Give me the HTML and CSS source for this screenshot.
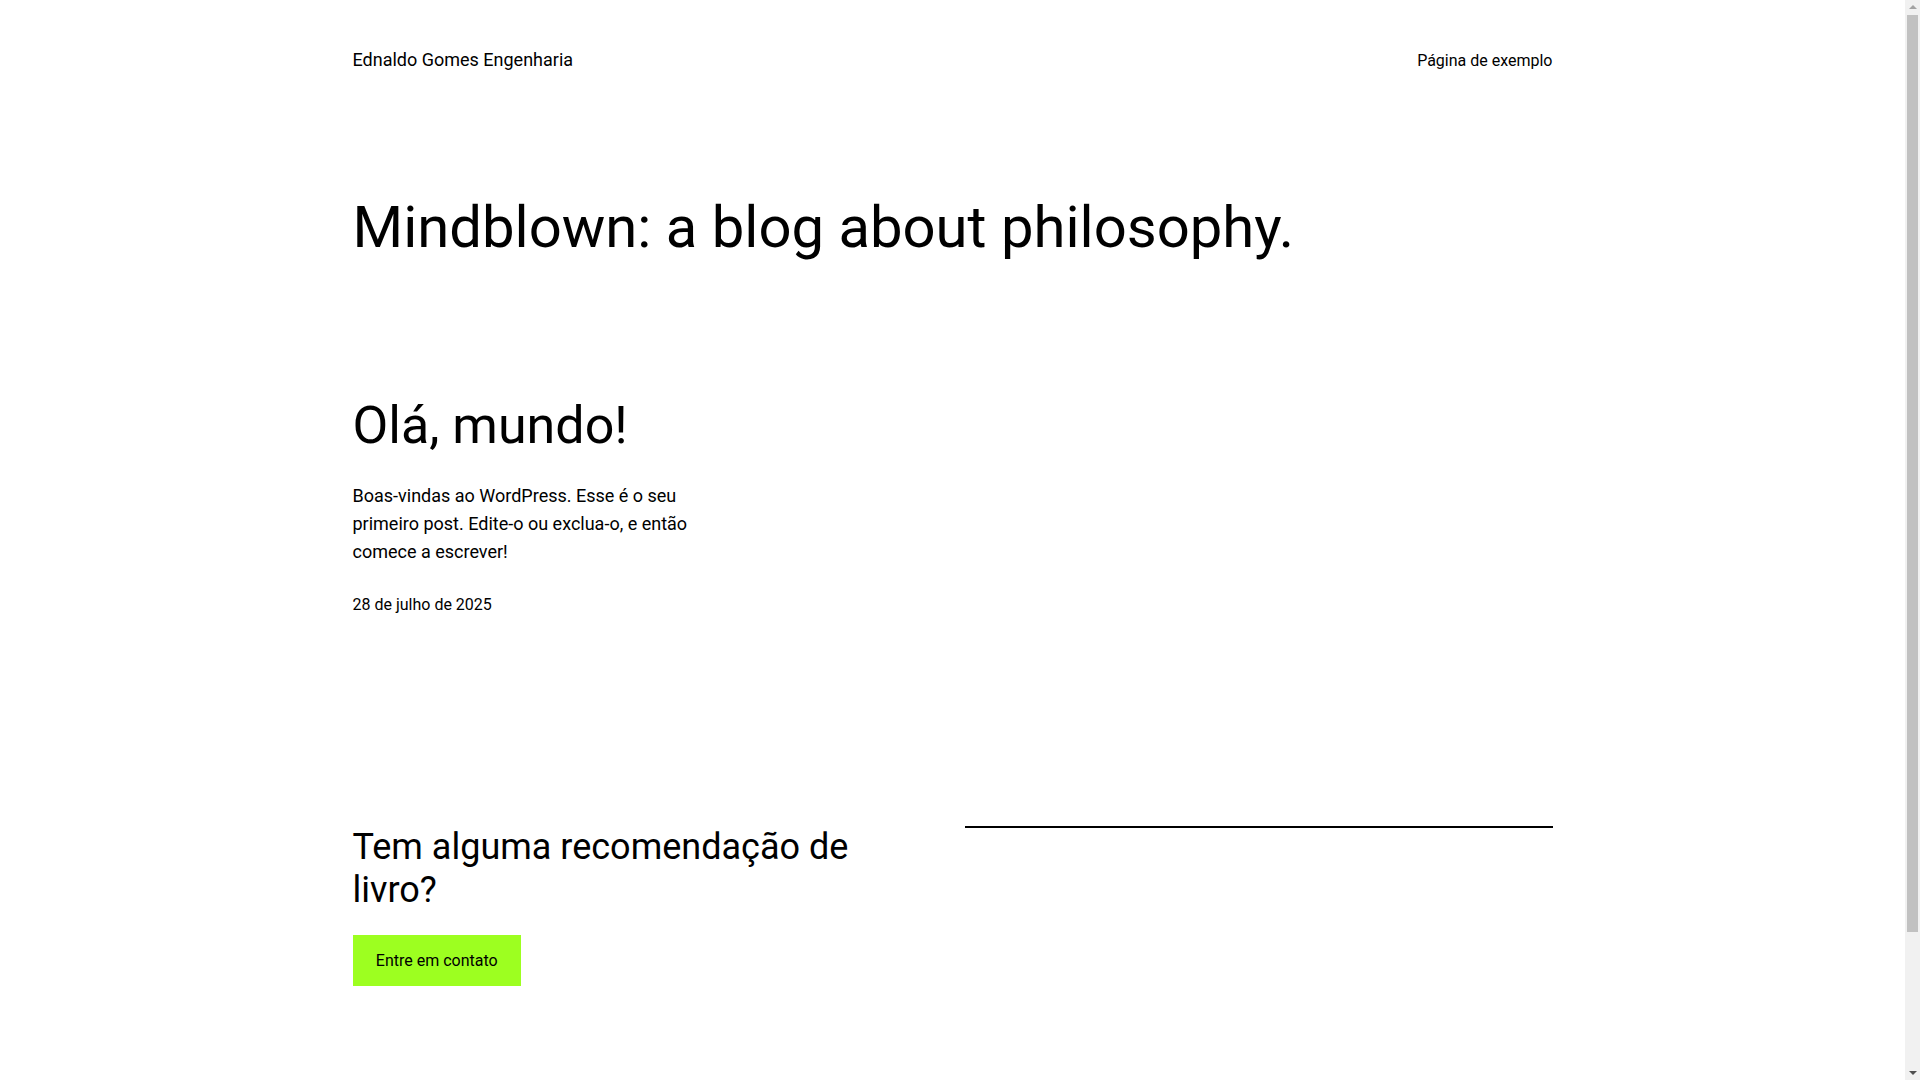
FILE: index.html
```html
<!DOCTYPE html>
<html lang="pt-BR">
<head>
<meta charset="utf-8">
<title>Ednaldo Gomes Engenharia</title>
<link rel="stylesheet" href="styles.css">
</head>
<body>
<div class="site">
  <header class="site-header">
    <a class="site-title" href="#">Ednaldo Gomes Engenharia</a>
    <nav class="site-nav"><a href="#">Página de exemplo</a></nav>
  </header>
  <main class="site-main">
    <h1 class="page-heading">Mindblown: a blog about philosophy.</h1>
    <section class="posts">
      <article class="post">
        <h2 class="post-title"><a href="#">Olá, mundo!</a></h2>
        <p class="post-excerpt">Boas-vindas ao WordPress. Esse é o seu primeiro post. Edite-o ou exclua-o, e então comece a escrever!</p>
        <time class="post-date">28 de julho de 2025</time>
      </article>
    </section>
    <section class="cta">
      <div class="cta-left">
        <h2 class="cta-heading">Tem alguma recomendação de livro?</h2>
        <a class="button" href="#">Entre em contato</a>
      </div>
      <div class="cta-right">
        <hr class="separator">
      </div>
    </section>
  </main>
</div>
<div class="scrollbar" aria-hidden="true">
  <div class="sb-arrow sb-up"></div>
  <div class="sb-track"><div class="sb-thumb"></div></div>
  <div class="sb-arrow sb-down"></div>
</div>
</body>
</html>
```

FILE: styles.css
```css
html, body {
  margin: 0;
  padding: 0;
  background: #ffffff;
}
html {
  overflow: hidden;
}
body {
  padding-right: 15px;
  font-family: Roboto, "Liberation Sans", sans-serif;
  color: #000000;
  -webkit-font-smoothing: antialiased;
}
a {
  color: inherit;
  text-decoration: none;
}
.site {
  width: 1200px;
  margin: 0 auto;
  padding-bottom: 250px;
}
.site-header {
  display: flex;
  justify-content: space-between;
  align-items: center;
  padding-top: 46px;
}
.site-title {
  font-size: 18px;
  line-height: 1.6;
}
.site-nav {
  font-size: 16px;
  line-height: 1.6;
}
.page-heading {
  margin: 118px 0 0;
  font-size: 58px;
  line-height: 1.2;
  font-weight: 400;
}
.posts {
  display: grid;
  grid-template-columns: repeat(3, 1fr);
  gap: 24px;
  margin-top: 133px;
}
.post-title {
  margin: 0;
  font-size: 52px;
  line-height: 1.2;
  font-weight: 400;
}
.post-excerpt {
  margin: 24px 0 0;
  font-size: 18px;
  line-height: 28.2px;
}
.post-date {
  display: block;
  margin-top: 25.6px;
  font-size: 16px;
  line-height: 1.6;
}
.cta {
  display: grid;
  grid-template-columns: 1fr 1fr;
  gap: 24px;
  margin-top: 208px;
}
.cta-heading {
  margin: 0;
  font-size: 36px;
  line-height: 1.2;
  font-weight: 400;
}
.button {
  display: inline-block;
  margin-top: 23px;
  padding: 12.67px 23.3px;
  background: #9dff20;
  color: #000000;
  font-size: 16px;
  line-height: 1.6;
}
.separator {
  margin: 0;
  border: 0;
  border-top: 2px solid #000000;
  height: 0;
}
.scrollbar {
  position: fixed;
  top: 0;
  right: 0;
  width: 15px;
  height: 100vh;
  background: #f1f1f1;
  display: flex;
  flex-direction: column;
}
.sb-arrow {
  height: 15px;
  flex: none;
  position: relative;
}
.sb-up::after,
.sb-down::after {
  content: "";
  position: absolute;
  left: 3.5px;
  width: 0;
  height: 0;
  border-left: 4px solid transparent;
  border-right: 4px solid transparent;
}
.sb-up::after {
  top: 5px;
  border-bottom: 4px solid #a3a3a3;
}
.sb-down::after {
  top: 6px;
  border-top: 4px solid #505050;
}
.sb-track {
  flex: 1;
  padding: 0 2px;
}
.sb-thumb {
  height: 917px;
  background: #c1c1c1;
}
```
